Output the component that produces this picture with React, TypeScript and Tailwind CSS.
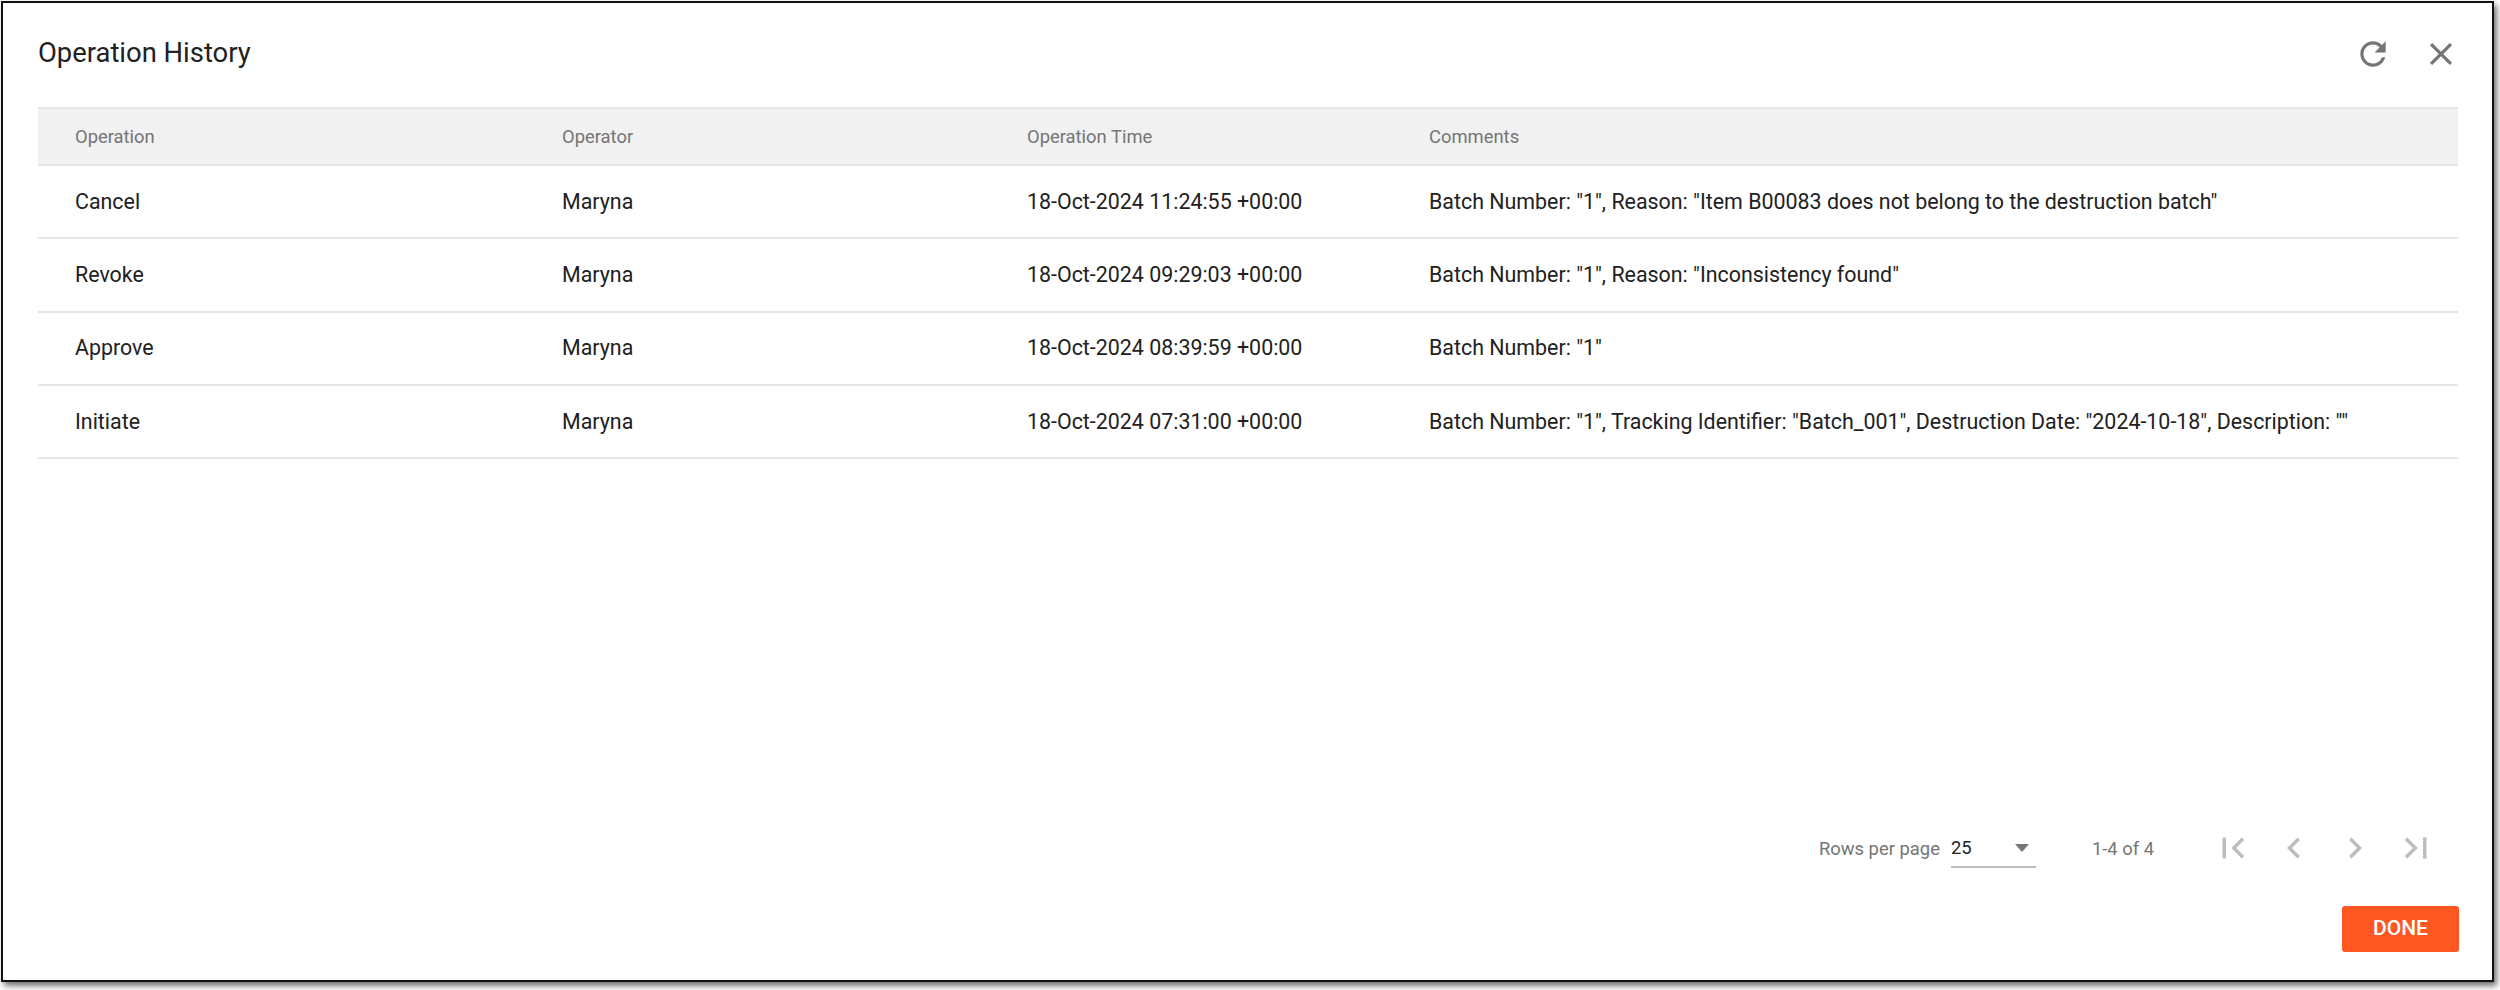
const rows = [
  {
    operation: "Cancel",
    operator: "Maryna",
    time: "18-Oct-2024 11:24:55 +00:00",
    comments: 'Batch Number: "1", Reason: "Item B00083 does not belong to the destruction batch"',
  },
  {
    operation: "Revoke",
    operator: "Maryna",
    time: "18-Oct-2024 09:29:03 +00:00",
    comments: 'Batch Number: "1", Reason: "Inconsistency found"',
  },
  {
    operation: "Approve",
    operator: "Maryna",
    time: "18-Oct-2024 08:39:59 +00:00",
    comments: 'Batch Number: "1"',
  },
  {
    operation: "Initiate",
    operator: "Maryna",
    time: "18-Oct-2024 07:31:00 +00:00",
    comments: 'Batch Number: "1", Tracking Identifier: "Batch_001", Destruction Date: "2024-10-18", Description: ""',
  },
]

const pagerIcons = [
  "M18.41 16.59L13.82 12l4.59-4.59L17 6l-6 6 6 6zM6 6h2v12H6z",
  "M15.41 7.41L14 6l-6 6 6 6 1.41-1.41L10.83 12z",
  "M10 6L8.59 7.41 13.17 12l-4.58 4.59L10 18l6-6z",
  "M5.59 7.41L10.18 12l-4.59 4.59L7 18l6-6-6-6zM16 6h2v12h-2z",
]

function RefreshIcon() {
  return (
    <svg viewBox="0 0 24 24" className="w-[38px] h-[38px] fill-[#757575]">
      <path d="M17.65 6.35C16.2 4.9 14.21 4 12 4c-4.42 0-7.99 3.58-7.99 8s3.57 8 7.99 8c3.73 0 6.84-2.55 7.73-6h-2.08c-.82 2.33-3.04 4-5.65 4-3.31 0-6-2.69-6-6s2.69-6 6-6c1.66 0 3.14.69 4.22 1.78L13 11h7V4l-2.35 2.35z" />
    </svg>
  )
}

function CloseIcon() {
  return (
    <svg viewBox="0 0 24 24" className="w-[38px] h-[38px] fill-[#757575]">
      <path d="M19 6.41L17.59 5 12 10.59 6.41 5 5 6.41 10.59 12 5 17.59 6.41 19 12 13.41 17.59 19 19 17.59 13.41 12z" />
    </svg>
  )
}

export default function App() {
  return (
    <div className="w-[2500px] h-[990px] bg-white pl-px pt-px font-['Roboto',sans-serif]">
      <div className="w-[2493px] h-[981px] border-2 border-[#111] bg-white flex flex-col shadow-[3px_4px_6px_rgba(0,0,0,0.55)]">
        {/* Title bar */}
        <div className="h-[104px] flex items-start justify-between pl-[35px] pr-[32px] pt-[32px]">
          <h2 className="text-[27.4px] leading-[36px] text-[#212121] font-normal">Operation History</h2>
          <div className="flex items-center gap-[30px]">
            <RefreshIcon />
            <CloseIcon />
          </div>
        </div>

        {/* Table */}
        <div className="ml-[35px] mr-[34px] text-[21.4px]">
          <div className="grid grid-cols-[487px_465px_402px_1fr] pl-[37px] h-[59px] items-center bg-[#f1f1f1] border-y-2 border-[#e6e6e6] text-[18.4px] text-[#757575]">
            <div>Operation</div>
            <div>Operator</div>
            <div>Operation Time</div>
            <div>Comments</div>
          </div>
          {rows.map((row) => (
            <div
              key={row.time}
              className="grid grid-cols-[487px_465px_402px_1fr] pl-[37px] h-[73.33px] items-center border-b-2 border-[#e6e6e6] text-[#212121]"
            >
              <div>{row.operation}</div>
              <div>{row.operator}</div>
              <div>{row.time}</div>
              <div>{row.comments}</div>
            </div>
          ))}
        </div>

        {/* Pagination */}
        <div className="mt-auto flex items-center justify-end pr-[55px] h-[40px] text-[18.4px] text-[#757575]">
          <span className="pt-[2px]">Rows per page</span>
          <div className="ml-[11px] w-[85px] h-[40px] flex items-center justify-between border-b-2 border-[#bdbdbd] text-[#212121] pr-[7px] pt-[2px]">
            <span>25</span>
            <span className="w-0 h-0 border-x-[7px] border-x-transparent border-t-[8px] border-t-[#757575]" />
          </div>
          <span className="ml-[56px] mr-[58px] pt-[1px]">1-4 of 4</span>
          <div className="flex items-center gap-[19px]">
            {pagerIcons.map((d) => (
              <svg key={d} viewBox="0 0 24 24" className="w-[42px] h-[42px] fill-[#bdbdbd]">
                <path d={d} />
              </svg>
            ))}
          </div>
        </div>

        {/* Actions */}
        <div className="flex justify-end pr-[33px] pb-[28px] pt-[38px]">
          <button className="w-[117px] h-[46px] rounded-[3px] bg-[#ff5722] text-white text-[21px] font-medium">DONE</button>
        </div>
      </div>
    </div>
  )
}
